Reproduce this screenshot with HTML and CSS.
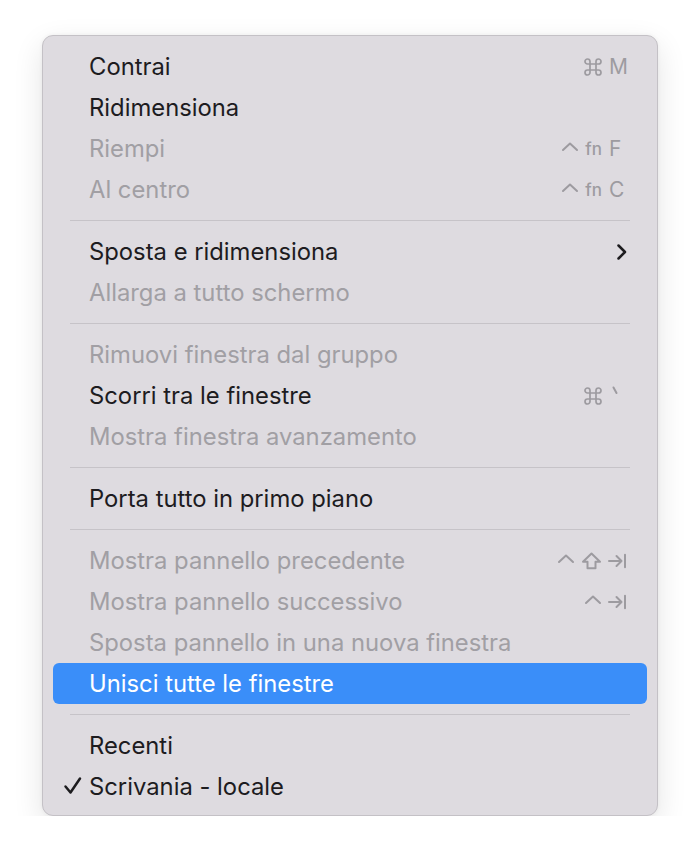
FILE: index.html
```html
<!DOCTYPE html>
<html>
<head>
    <title>Finestra</title>
    <link rel="stylesheet" href="styles.css">
</head>
<body>

<div class="menu">
    <div class="item">
        <span class="label">Contrai</span>
        <span class="mods">
            <svg class="cmd" width="18" height="18" viewBox="0 0 18 18"><path d="M6 6 V3.5 A2.5 2.5 0 1 0 3.5 6 H14.5 A2.5 2.5 0 1 0 12 3.5 V14.5 A2.5 2.5 0 1 0 14.5 12 H3.5 A2.5 2.5 0 1 0 6 14.5 Z"/></svg>
        </span>
        <span class="key">M</span>
    </div>
    <div class="item"><span class="label">Ridimensiona</span></div>
    <div class="item off">
        <span class="label">Riempi</span>
        <span class="mods">
            <svg class="caret" width="18" height="12" viewBox="0 0 18 12"><path d="M2 9 L9 2.5 L16 9"/></svg>
            <span class="fn">fn</span>
        </span>
        <span class="key">F</span>
    </div>
    <div class="item off">
        <span class="label">Al centro</span>
        <span class="mods">
            <svg class="caret" width="18" height="12" viewBox="0 0 18 12"><path d="M2 9 L9 2.5 L16 9"/></svg>
            <span class="fn">fn</span>
        </span>
        <span class="key">C</span>
    </div>

    <div class="sep"></div>

    <div class="item">
        <span class="label">Sposta e ridimensiona</span>
        <svg class="chevron" width="12" height="18" viewBox="0 0 12 18"><path d="M2.5 2.5 L9 9 L2.5 15.5"/></svg>
    </div>
    <div class="item off"><span class="label">Allarga a tutto schermo</span></div>

    <div class="sep"></div>

    <div class="item off"><span class="label">Rimuovi finestra dal gruppo</span></div>
    <div class="item">
        <span class="label">Scorri tra le finestre</span>
        <span class="mods">
            <svg class="cmd" width="18" height="18" viewBox="0 0 18 18"><path d="M6 6 V3.5 A2.5 2.5 0 1 0 3.5 6 H14.5 A2.5 2.5 0 1 0 12 3.5 V14.5 A2.5 2.5 0 1 0 14.5 12 H3.5 A2.5 2.5 0 1 0 6 14.5 Z"/></svg>
        </span>
        <span class="key">
            <svg class="tick" width="10" height="12" viewBox="0 0 10 12"><path d="M3.5 1.5 L6.5 7"/></svg>
        </span>
    </div>
    <div class="item off"><span class="label">Mostra finestra avanzamento</span></div>

    <div class="sep"></div>

    <div class="item"><span class="label">Porta tutto in primo piano</span></div>

    <div class="sep"></div>

    <div class="item off">
        <span class="label">Mostra pannello precedente</span>
        <span class="mods">
            <svg class="caret" width="18" height="12" viewBox="0 0 18 12"><path d="M2 9 L9 2.5 L16 9"/></svg>
            <svg class="shift" width="21" height="18" viewBox="0 0 21 18"><path d="M10.5 1.5 L19 9.8 L14.5 9.8 L14.5 16.2 L6.5 16.2 L6.5 9.8 L2 9.8 Z"/></svg>
        </span>
        <span class="key">
            <svg class="tab" width="19" height="16" viewBox="0 0 19 16"><path d="M1 8 H13.5 M8.5 3 L13.5 8 L8.5 13 M17 1.8 V14.2"/></svg>
        </span>
    </div>
    <div class="item off">
        <span class="label">Mostra pannello successivo</span>
        <span class="mods">
            <svg class="caret" width="18" height="12" viewBox="0 0 18 12"><path d="M2 9 L9 2.5 L16 9"/></svg>
        </span>
        <span class="key">
            <svg class="tab" width="19" height="16" viewBox="0 0 19 16"><path d="M1 8 H13.5 M8.5 3 L13.5 8 L8.5 13 M17 1.8 V14.2"/></svg>
        </span>
    </div>
    <div class="item off"><span class="label">Sposta pannello in una nuova finestra</span></div>
    <div class="item active"><span class="label">Unisci tutte le finestre</span></div>

    <div class="sep"></div>

    <div class="item"><span class="label">Recenti</span></div>
    <div class="item">
        <svg class="check" width="20" height="20" viewBox="0 0 20 20"><path d="M2.5 10.5 L7.5 16.5 L17 2.5"/></svg>
        <span class="label">Scrivania - locale</span>
    </div>
</div>

</body>
</html>
```

FILE: styles.css
```css
body {
    margin: 0;
    padding: 35px 0 0 42px;
    background-color: #fff;
    font-family: Inter, "Liberation Sans", sans-serif;
}

/* the menu panel */
.menu {
    width: 594px;
    padding: 10px 10px 8px 10px;
    background-color: #dedbe0;
    border: 1px solid #c4c1c6;
    border-radius: 11px;
    box-shadow: 0 10px 30px rgba(0, 0, 0, 0.11), 0 0 4px rgba(0, 0, 0, 0.05);
}

.item {
    position: relative;
    display: flex;
    align-items: center;
    height: 41px;
    padding: 0 18px 0 36px;
    border-radius: 6px;
    font-size: 23.8px;
    color: #1d1c1f;
}

.item .label {
    flex: 1;
    white-space: nowrap;
}

.item.off {
    color: #a19fa4;
}

.item.active {
    background-color: #3a8ef9;
    color: #fff;
}

/* keyboard shortcut column */
.mods {
    display: flex;
    align-items: center;
    gap: 6px;
    margin-right: 7px;
    color: #9d9ba0;
}

.key {
    display: flex;
    align-items: center;
    width: 20px;
    font-size: 21px;
    color: #9d9ba0;
}

.fn {
    font-size: 17px;
    font-weight: 500;
}

.mods svg path,
.key svg path {
    fill: none;
    stroke: #9d9ba0;
    stroke-width: 2;
    stroke-linecap: round;
    stroke-linejoin: round;
}

.mods .cmd path {
    stroke-width: 1.7;
}

.caret {
    margin-top: -4px;
}

.tab {
    margin-left: -1px;
}

.tick {
    margin: -8px 0 0 1px;
}

.chevron {
    margin-right: 1px;
}

.chevron path,
.check path {
    fill: none;
    stroke: #1d1c1f;
    stroke-width: 2.5;
    stroke-linecap: round;
    stroke-linejoin: round;
}

.check {
    position: absolute;
    left: 10px;
    top: 10px;
}

.sep {
    height: 1px;
    margin: 10px 17px;
    background-color: #c6c3c8;
}
```
